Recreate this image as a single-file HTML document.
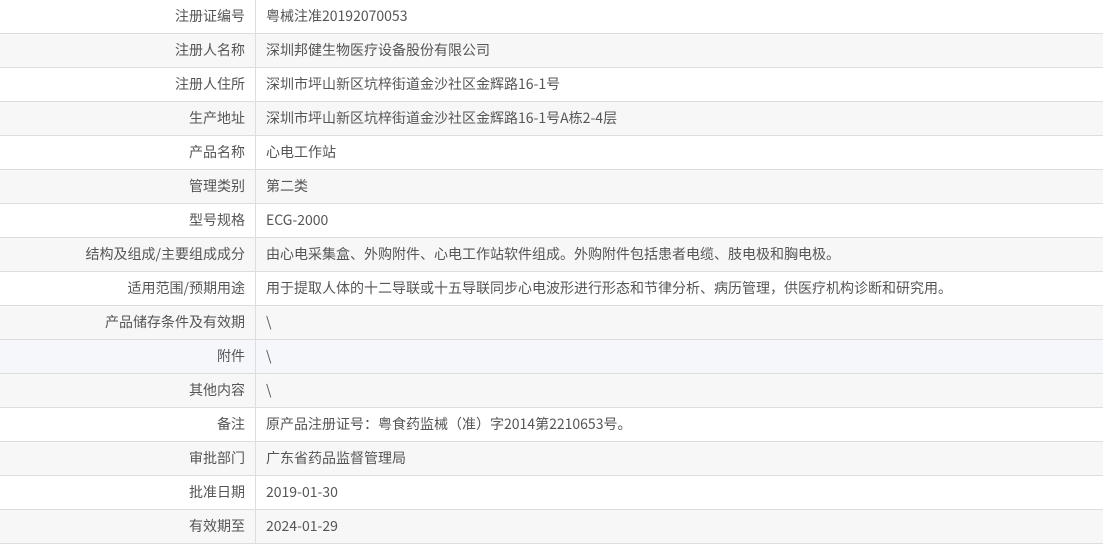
<!DOCTYPE html>
<html><head><meta charset="utf-8"><style>
body{margin:0;background:#fff;font-family:"Noto Sans CJK SC","Liberation Sans",sans-serif;font-size:14px;color:#555}
table{border-collapse:collapse;width:1103px;table-layout:fixed}
td{height:33px;padding:0;border-bottom:1px solid #ddd;vertical-align:middle;line-height:33px;white-space:nowrap}
td.l{width:245px;text-align:right;padding-right:10px;border-right:1px solid #ddd;color:#555}
td.v{padding-left:10px}
tr:nth-child(even) td{background:#f7f7f7}
tr.h td{background:#f5f7fa}
</style></head><body><table>
<tr><td class="l">注册证编号</td><td class="v">粤械注准20192070053</td></tr>
<tr><td class="l">注册人名称</td><td class="v">深圳邦健生物医疗设备股份有限公司</td></tr>
<tr><td class="l">注册人住所</td><td class="v">深圳市坪山新区坑梓街道金沙社区金辉路16-1号</td></tr>
<tr><td class="l">生产地址</td><td class="v">深圳市坪山新区坑梓街道金沙社区金辉路16-1号A栋2-4层</td></tr>
<tr><td class="l">产品名称</td><td class="v">心电工作站</td></tr>
<tr><td class="l">管理类别</td><td class="v">第二类</td></tr>
<tr><td class="l">型号规格</td><td class="v">ECG-2000</td></tr>
<tr><td class="l">结构及组成/主要组成成分</td><td class="v">由心电采集盒、外购附件、心电工作站软件组成。外购附件包括患者电缆、肢电极和胸电极。</td></tr>
<tr><td class="l">适用范围/预期用途</td><td class="v">用于提取人体的十二导联或十五导联同步心电波形进行形态和节律分析、病历管理，供医疗机构诊断和研究用。</td></tr>
<tr><td class="l">产品储存条件及有效期</td><td class="v">\</td></tr>
<tr class="h"><td class="l">附件</td><td class="v">\</td></tr>
<tr><td class="l">其他内容</td><td class="v">\</td></tr>
<tr><td class="l">备注</td><td class="v">原产品注册证号：粤食药监械（准）字2014第2210653号。</td></tr>
<tr><td class="l">审批部门</td><td class="v">广东省药品监督管理局</td></tr>
<tr><td class="l">批准日期</td><td class="v">2019-01-30</td></tr>
<tr><td class="l">有效期至</td><td class="v">2024-01-29</td></tr>
</table></body></html>
